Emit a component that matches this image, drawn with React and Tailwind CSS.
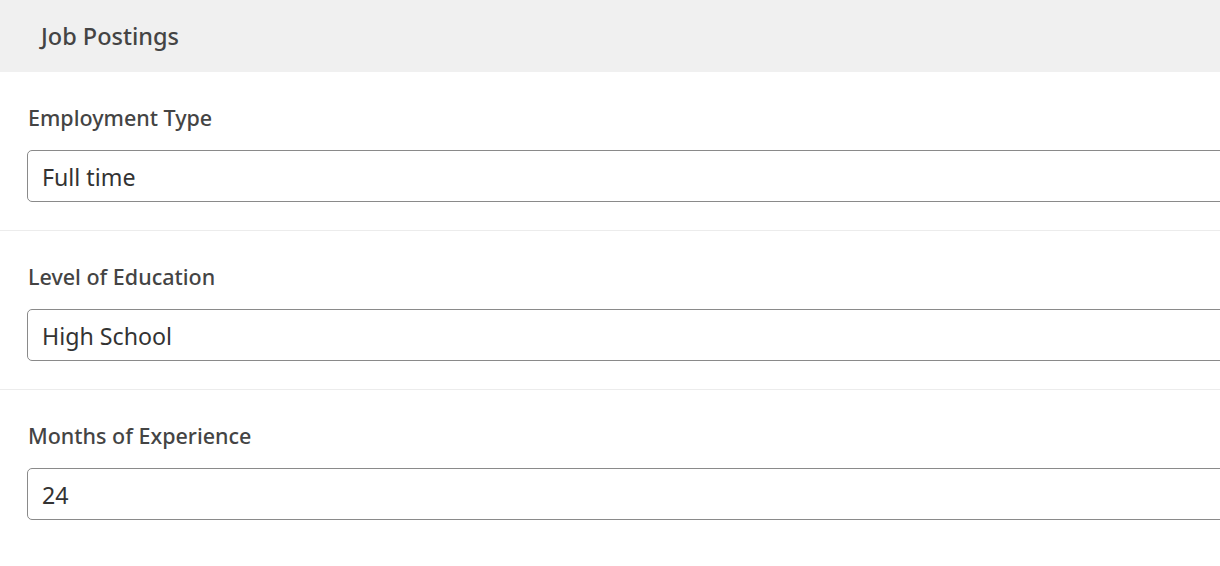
const FIELDS = [
  { label: 'Employment Type', value: 'Full time' },
  { label: 'Level of Education', value: 'High School' },
  { label: 'Months of Experience', value: '24' },
]

export default function App() {
  return (
    <div className="w-full h-[566px] overflow-hidden bg-white" style={{ fontFamily: '"Noto Sans", "Open Sans", sans-serif' }}>
      <div className="h-[72px] bg-[#f0f0f0] flex items-center pl-[41px]">
        <h1 className="text-[23.5px] leading-[32px] font-medium text-[#444]">Job Postings</h1>
      </div>
      {FIELDS.map((f, i) => (
        <Field key={f.label} field={f} last={i === FIELDS.length - 1} />
      ))}
    </div>
  )
}

function Field({ field, last }) {
  return (
    <div className={`pl-[27px] pt-[32px] pb-[28px] ${last ? '' : 'border-b border-[#ececec]'}`}>
      <label className="block h-[28px] leading-[28px] pl-px text-[21.5px] font-medium text-[#444]">{field.label}</label>
      <div className="mt-[18px] w-[1240px] h-[52px] rounded-[5px] border border-[#8a8a8a] flex items-center pl-[14px] pt-[2px] leading-[30px] text-[23.2px] text-[#333]">
        {field.value}
      </div>
    </div>
  )
}
